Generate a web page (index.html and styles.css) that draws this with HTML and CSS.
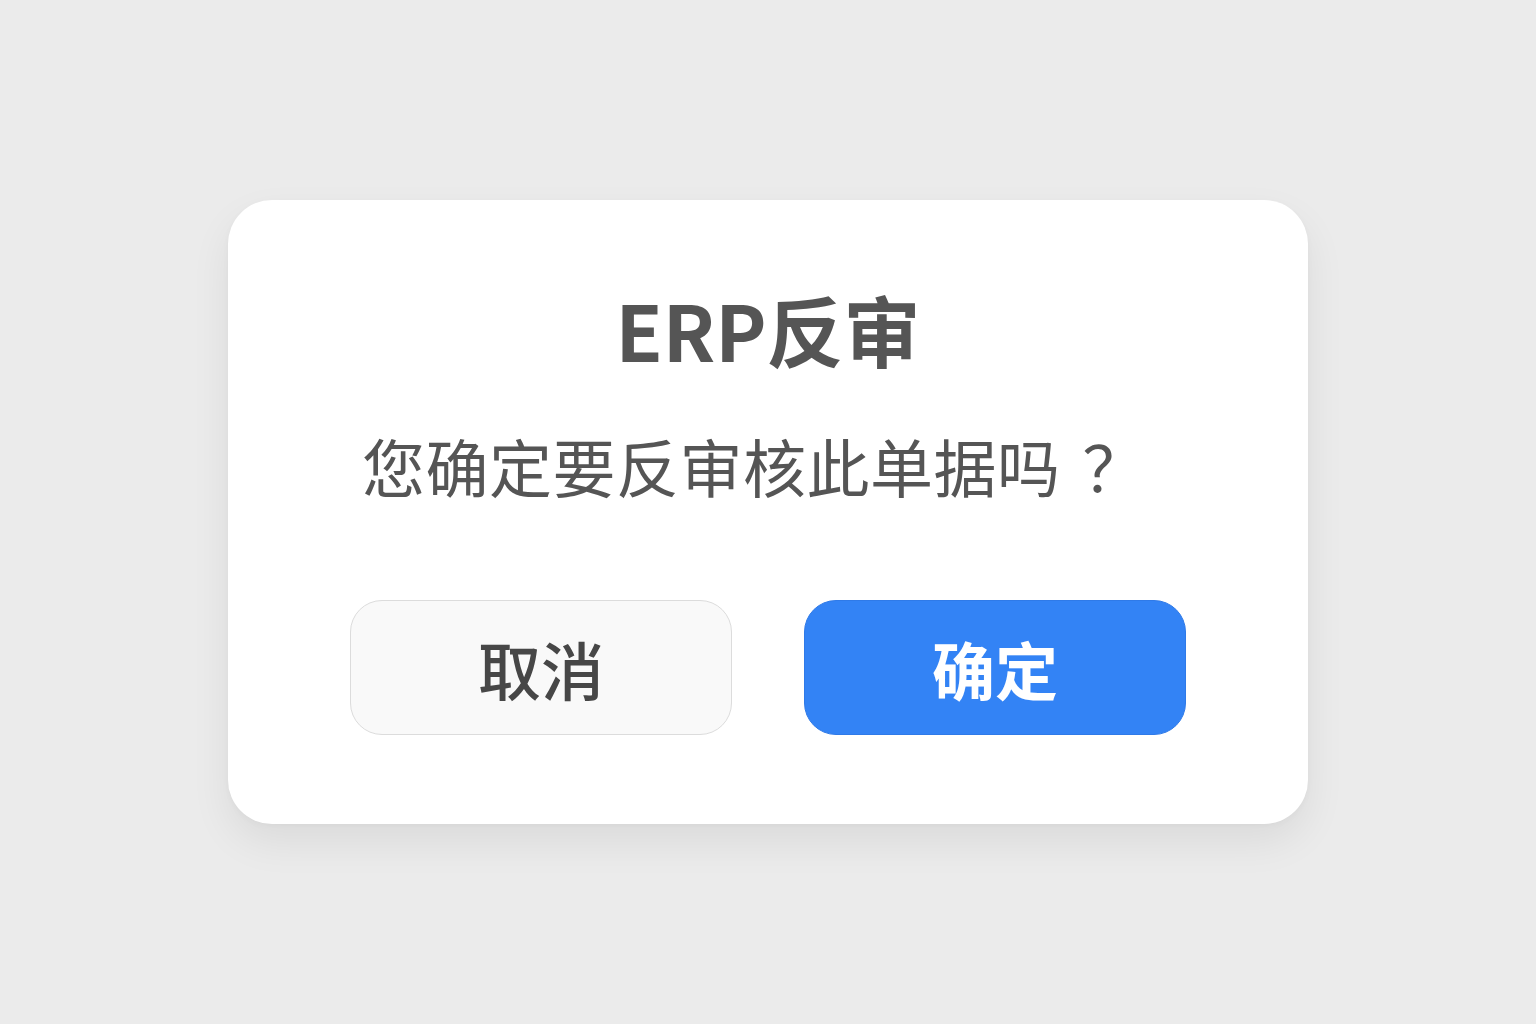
FILE: index.html
```html
<!DOCTYPE html>
<html lang="zh-CN"><head><meta charset="utf-8"/>
<link rel="stylesheet" href="styles.css">
<title>ERP反审</title></head>
<body>
<div class="dialog">
  <h2 class="title">ERP反审</h2>
  <p class="msg">您确定要反审核此单据吗<span class="q">？</span></p>
  <div class="btns">
    <button class="btn cancel">取消</button>
    <button class="btn ok">确定</button>
  </div>
</div>
</body></html>
```
FILE: styles.css
```css
*{ padding:0; margin:0; box-sizing:border-box; }
body{ background:#ebebeb; width:1536px; height:1024px; font-family:"Noto Sans CJK SC","Noto Sans",sans-serif; color:#555; }
.dialog{ position:absolute; left:228px; top:200px; width:1080px; height:624px; background:#fff; border-radius:44px;
  box-shadow:0 18px 40px rgba(0,0,0,0.07), 0 2px 6px rgba(0,0,0,0.03); padding:91px 122px 0; }
.title{ font-size:77px; line-height:76px; font-weight:700; text-align:center; color:#555; }
.msg{ margin-top:67px; font-size:63px; line-height:62px; font-weight:400; letter-spacing:0.5px; padding-left:12px; color:#555; white-space:nowrap; }
.q{ font-weight:400; margin-left:22px; }
.btns{ margin-top:104px; display:flex; justify-content:space-between; }
.btn{ width:382px; height:135px; border-radius:32px; font-family:inherit; font-size:63px; display:flex; align-items:center; justify-content:center; }
.cancel{ background:#f9f9f9; border:1.5px solid #dcdcdc; color:#474747; font-weight:500; }
.ok{ background:#3383f5; border:1px solid #2f7ae8; color:#fff; font-weight:700; }
```
